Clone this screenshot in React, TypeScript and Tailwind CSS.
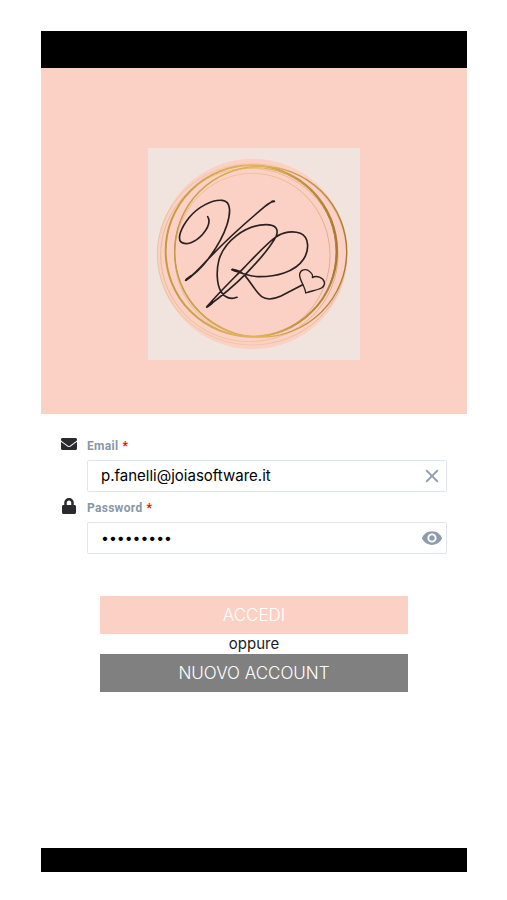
import { useState } from 'react';
import { FaEnvelope, FaLock } from 'react-icons/fa';
import { MdClose, MdRemoveRedEye } from 'react-icons/md';

function Logo() {
  return (
    <svg viewBox="24 24 636 636" className="block w-53 h-53 bg-[#f1e4df]" role="img" aria-label="VR">
      <defs>
        <linearGradient id="gold" x1="0" y1="0" x2="1" y2="0">
          <stop offset="0" stopColor="#c49a45" />
          <stop offset="0.5" stopColor="#e3b45c" />
          <stop offset="1" stopColor="#a87a30" />
        </linearGradient>
      </defs>

      <circle cx="338" cy="342" r="286" fill="#fbd1c5" />

      {/* Gold rings */}
      <g fill="none" stroke="url(#gold)">
        <ellipse cx="334" cy="333" rx="257" ry="257" strokeWidth="6" />
        <ellipse cx="362" cy="335" rx="258" ry="256" strokeWidth="4" />
        <ellipse cx="346" cy="336" rx="242" ry="253" strokeWidth="3" />
        <ellipse cx="336" cy="343" rx="284" ry="272" strokeWidth="2" opacity="0.5" />
        <ellipse cx="337" cy="346" rx="233" ry="246" strokeWidth="2" opacity="0.6" />
        <ellipse cx="328" cy="345" rx="266" ry="260" strokeWidth="2" opacity="0.6" />
      </g>

      {/* Monogram */}
      <g fill="none" stroke="#2b201f" strokeWidth="5" strokeLinecap="round" strokeLinejoin="round">
        <path d="M203 230 C212 244 204 264 188 283 C166 308 137 317 123 306 C111 294 124 262 147 233 C174 201 216 178 247 181 C277 184 270 226 261 254 C249 291 228 326 203 359 C182 386 159 406 137 421 C158 407 177 388 203 359 C248 311 325 241 374 200 C386 190 395 183 403 184" />
        <path d="M291 472 C272 480 253 472 243 455 C229 430 229 390 237 359 C253 306 314 255 378 254 C409 254 417 268 408 290 C391 321 356 362 322 397 C282 438 236 475 200 501 C239 455 278 418 313 382 C345 349 378 313 405 293 C430 274 461 272 481 280 C507 291 509 329 491 357 C465 397 406 411 353 410 C326 408 299 398 276 389 C289 390 302 394 312 404 C329 421 344 452 365 470 C382 482 403 477 423 468 L488 434" />
        <path strokeWidth="4" d="M497 459 C496 440 476 418 479 402 C482 388 497 386 507 393 C516 400 520 406 517 413 C529 405 549 412 553 426 C557 451 520 449 497 459 Z" />
      </g>
      <g fill="none" stroke="#2b201f" strokeWidth="7" strokeLinecap="round">
        <path d="M139 419 L152 409" />
        <path d="M203 499 L216 489" />
        <path d="M278 389 L288 393" />
        <path d="M396 184 L402 184" strokeWidth="5" />
      </g>
    </svg>
  );
}

const labelClass = "flex h-5 items-center gap-1 text-[12px] font-bold tracking-wide text-[#8a97a8] font-['Roboto',sans-serif]";
const inputClass =
  "h-8 w-full rounded-xs border border-[#dfe4f0] bg-white pl-[13px] pr-10 pb-0.5 font-['Inter',sans-serif] text-black outline-none";

export default function App() {
  const [email, setEmail] = useState('p.fanelli@joiasoftware.it');
  const [password, setPassword] = useState('password1');
  const [visible, setVisible] = useState(false);

  return (
    <div className="flex min-h-screen flex-col bg-white pl-[41px] pr-10 pt-[31px] pb-7 font-['Inter',sans-serif]">
      <div className="h-[37px] bg-black" />
      <header className="flex justify-center bg-[#fbd1c5] pt-20 pb-13.5">
        <Logo />
      </header>

      <form className="flex grow flex-col px-5 pt-[22px]" onSubmit={(e) => e.preventDefault()}>
        <div className="flex">
          <FaEnvelope className="w-[26px] shrink-0 pr-2.5 text-[#2b2b2d]" size={16} />
          <div className="grow">
            <label htmlFor="email" className={labelClass}>
              Email <span className="text-[#ff0000]">*</span>
            </label>
            <div className="relative mt-1">
              <input
                id="email"
                type="email"
                className={`${inputClass} text-[15px]`}
                value={email}
                onChange={(e) => setEmail(e.target.value)}
              />
              <button
                type="button"
                aria-label="Cancella"
                className="absolute inset-y-0 right-1 flex items-center text-[#8f9bad]"
                onClick={() => setEmail('')}
              >
                <MdClose size={22} />
              </button>
            </div>
          </div>
        </div>

        <div className="mt-1.5 flex">
          <FaLock className="w-[26px] shrink-0 pr-2.5 text-[#2b2b2d]" size={16} />
          <div className="grow">
            <label htmlFor="password" className={labelClass}>
              Password <span className="text-[#ff0000]">*</span>
            </label>
            <div className="relative mt-1">
              <input
                id="password"
                type={visible ? 'text' : 'password'}
                className={`${inputClass} text-[14px]`}
                value={password}
                onChange={(e) => setPassword(e.target.value)}
              />
              <button
                type="button"
                aria-label="Mostra password"
                className="absolute inset-y-0 right-1 flex items-center text-[#8f9bad]"
                onClick={() => setVisible(!visible)}
              >
                <MdRemoveRedEye size={22} />
              </button>
            </div>
          </div>
        </div>

        <div className="mx-[39px] mt-[42px] flex flex-col text-center">
          <button type="submit" className="h-[38px] bg-[#fbd1c5] pt-0.5 text-[17px] font-light text-white">
            ACCEDI
          </button>
          <span className="text-[15px] leading-5 text-[#1c1c1e]">oppure</span>
          <button type="button" className="h-[38px] bg-[#808080] pt-0.5 text-[17px] font-light text-white">
            NUOVO ACCOUNT
          </button>
        </div>
      </form>

      <div className="h-6 bg-black" />
    </div>
  );
}
